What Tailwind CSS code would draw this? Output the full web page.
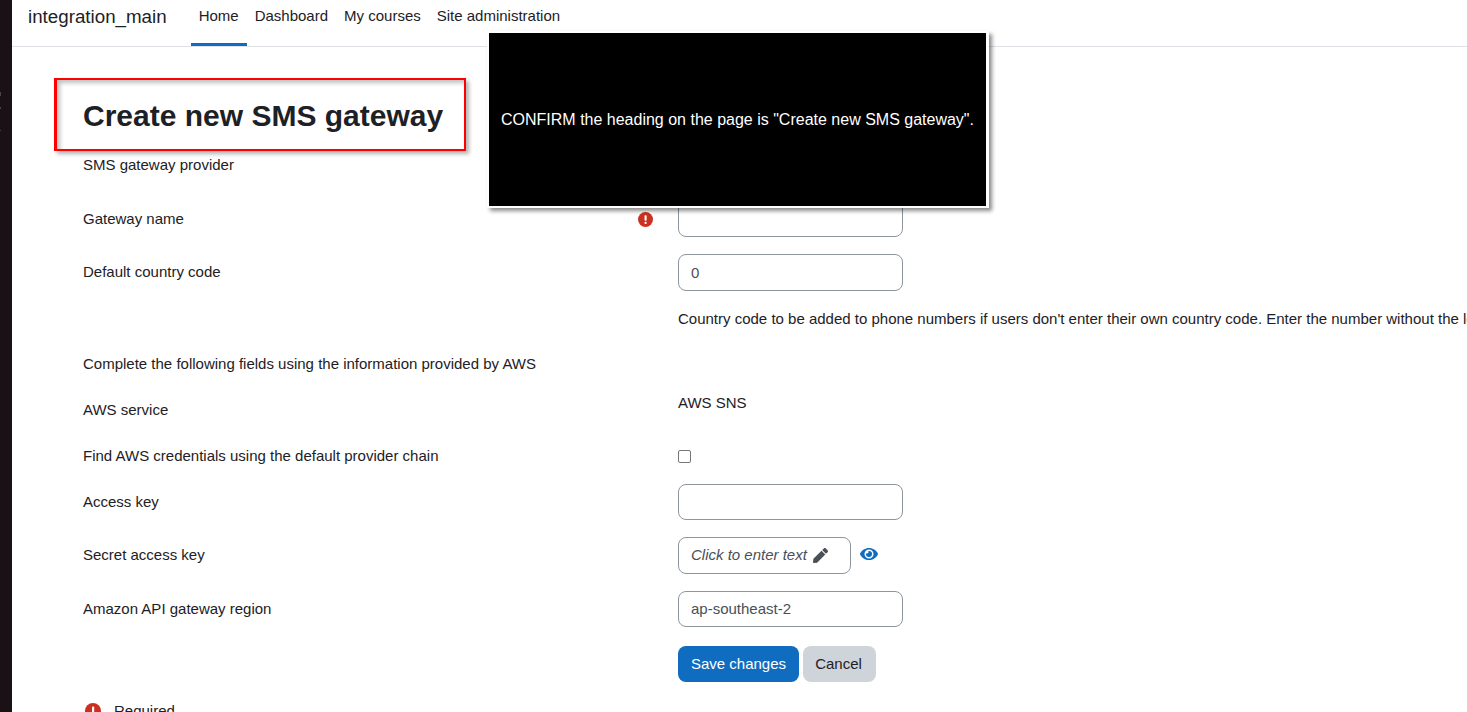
<!DOCTYPE html>
<html lang="en">
<head>
  <meta charset="UTF-8" />
  <title>Create new SMS gateway</title>
  <script src="https://cdn.jsdelivr.net/npm/@tailwindcss/browser@4"></script>
</head>
<body class="bg-white h-[712px] overflow-hidden font-['Liberation_Sans',sans-serif] text-[15px] text-[#1d2125]">
  <div class="relative flex h-[712px] overflow-hidden">
    <!-- desktop strip showing at the left edge -->
    <div class="w-3 shrink-0 bg-[#1a1116] pt-[92px]">
      <div class="h-[4px] w-[1px] bg-[#4a4347]"></div>
      <div class="mt-[11px] h-[2px] w-[1px] bg-[#4a4347]"></div>
      <div class="mt-[21px] h-[1px] w-[1px] bg-[#4a4347]"></div>
    </div>

    <div class="flex-1 min-w-0">
      <nav class="flex h-[47px] items-stretch border-b border-[#dee2e6] pl-4">
        <a class="mr-6 flex items-center pb-[12px] text-[18.75px] text-[#1d2125]">integration_main</a>
        <a class="flex items-center border-b-[3px] border-[#0f6cbf] px-2 pb-[10px]">Home</a>
        <a class="flex items-center px-2 pb-[13px]">Dashboard</a>
        <a class="flex items-center px-2 pb-[13px]">My courses</a>
        <a class="flex items-center px-2 pb-[13px]">Site administration</a>
      </nav>

      <main class="pl-[71px]">
        <h1 class="mt-[50px] h-[38px] text-[30px] leading-[38px] font-bold">Create new SMS gateway</h1>

        <form class="mt-[18px] w-[1500px]">
          <div class="flex h-[48px] pt-[1px]">
            <label class="w-[595px] leading-[22px]">SMS gateway provider</label>
          </div>
          <div class="flex h-[53px] items-start">
            <label class="flex w-[595px] pr-[25px] justify-between pt-[7px] leading-[22px]">
              <span>Gateway name</span>
              <svg class="mt-[4px] h-[15px] w-[15px] text-[#ca3120]" viewBox="0 0 16 16"><circle cx="8" cy="8" r="8" fill="currentColor"/><rect x="7" y="3.4" width="2.2" height="6" rx="0.8" fill="#fff"/><rect x="7" y="10.5" width="2.2" height="2.2" rx="0.8" fill="#fff"/></svg>
            </label>
            <input class="h-[36px] w-[225px] rounded-[8px] border border-[#8f959e] bg-white" />
          </div>
          <div class="flex h-[53px] items-start">
            <label class="w-[595px] pt-[7px] leading-[22px]">Default country code</label>
            <input value="0" class="h-[37px] w-[225px] rounded-[8px] border border-[#8f959e] bg-white px-3 text-[#495057]" />
          </div>
          <p class="ml-[595px] h-[46px] whitespace-nowrap pt-[1px] leading-[22px]">Country code to be added to phone numbers if users don't enter their own country code. Enter the number without the leading plus sign.</p>
          <div class="h-[46px] leading-[22px]">Complete the following fields using the information provided by AWS</div>
          <div class="flex h-[46px]">
            <label class="w-[595px] leading-[22px]">AWS service</label>
            <span class="-mt-[7px] leading-[22px]">AWS SNS</span>
          </div>
          <div class="flex h-[39px]">
            <label class="w-[595px] leading-[22px]">Find AWS credentials using the default provider chain</label>
            <input type="checkbox" class="mt-[5px] h-[13px] w-[13px] appearance-none rounded-[2px] border border-[#767676] bg-white" />
          </div>
          <div class="flex h-[53px] items-start">
            <label class="w-[595px] pt-[7px] leading-[22px]">Access key</label>
            <input class="h-[36px] w-[225px] rounded-[8px] border border-[#8f959e] bg-white" />
          </div>
          <div class="flex h-[54px] items-start">
            <label class="w-[595px] pt-[7px] leading-[22px]">Secret access key</label>
            <div class="flex h-[37px] w-[173px] items-center rounded-[8px] border border-[#8f959e] px-3 text-[#495057] italic">
              Click to enter text
              <svg class="ml-[6px] h-[15px] w-[15px]" viewBox="0 0 512 512" fill="#495057"><path d="M290.74 93.24l128.02 128.02-277.99 277.99-114.14 12.6C11.35 513.54-1.56 500.62.14 485.34l12.7-114.22 277.9-277.88zm207.2-19.06l-60.11-60.11c-18.75-18.75-49.16-18.75-67.91 0l-56.55 56.55 128.02 128.02 56.55-56.55c18.75-18.76 18.75-49.16 0-67.91z"/></svg>
            </div>
            <svg class="ml-[9px] mt-[9px] h-[16px] w-[18px]" viewBox="0 0 576 512" fill="#0f6cbf"><path d="M572.52 241.4C518.29 135.59 410.93 64 288 64S57.68 135.64 3.48 241.41a32.35 32.35 0 0 0 0 29.19C57.71 376.41 165.07 448 288 448s230.32-71.64 284.52-177.41a32.35 32.35 0 0 0 0-29.19zM288 400a144 144 0 1 1 144-144 143.93 143.93 0 0 1-144 144zm0-240a95.31 95.31 0 0 0-25.31 3.79 47.85 47.85 0 0 1-66.9 66.9A95.78 95.78 0 1 0 288 160z"/></svg>
          </div>
          <div class="flex h-[55px] items-start">
            <label class="w-[595px] pt-[7px] leading-[22px]">Amazon API gateway region</label>
            <input value="ap-southeast-2" class="h-[36px] w-[225px] rounded-[8px] border border-[#8f959e] bg-white px-3 pb-[2px] text-[#495057]" />
          </div>
          <div class="ml-[595px] flex h-[54px] gap-1">
            <button type="button" class="h-[36px] w-[121px] rounded-[8px] bg-[#0f6cbf] text-white">Save changes</button>
            <button type="button" class="h-[36px] w-[73px] rounded-[8px] bg-[#ced4da] pr-[2px]">Cancel</button>
          </div>
          <div class="flex items-center pl-[2px]">
            <svg class="h-4 w-4 text-[#ca3120]" viewBox="0 0 16 16"><circle cx="8" cy="8" r="8" fill="currentColor"/><rect x="7" y="3.4" width="2.2" height="6" rx="0.8" fill="#fff"/><rect x="7" y="10.5" width="2.2" height="2.2" rx="0.8" fill="#fff"/></svg>
            <span class="ml-[13px] leading-[22px]">Required</span>
          </div>
        </form>
      </main>
    </div>

    <!-- annotation layer drawn over the page -->
    <div class="absolute left-[54px] top-[78px] h-[73px] w-[412px] border-t-2 border-r-2 border-b-2 border-l-[3px] border-[#ff0000] shadow-[3px_3px_4px_rgba(0,0,0,0.3),inset_3px_3px_4px_rgba(0,0,0,0.25)]"></div>
    <div class="absolute left-[487px] top-[31px] flex h-[177px] w-[502px] items-center justify-center border-t-2 border-r-[3px] border-b-2 border-l-2 border-white bg-black text-[16px] text-white shadow-[3px_3px_4px_rgba(0,0,0,0.45)]">CONFIRM the heading on the page is "Create new SMS gateway".</div>
  </div>
</body>
</html>
